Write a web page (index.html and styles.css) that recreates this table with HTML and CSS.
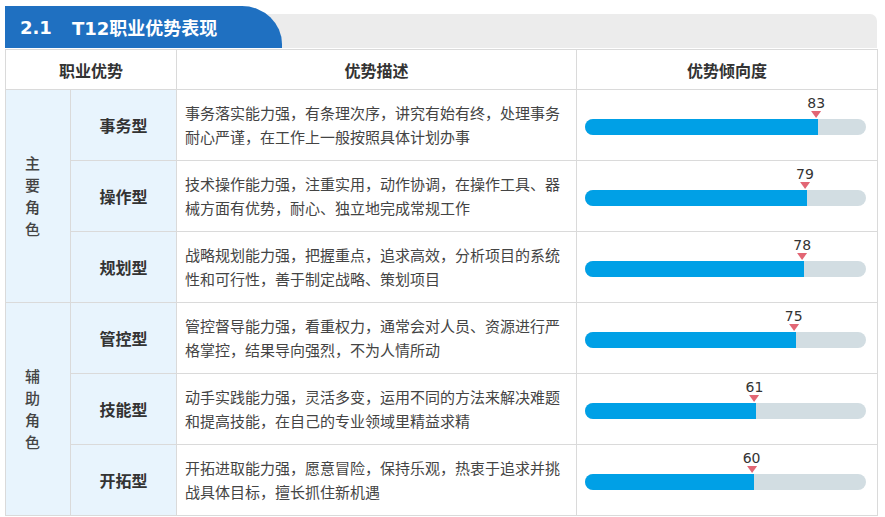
FILE: index.html
```html
<!DOCTYPE html>
<html lang="zh-CN">
<head>
<meta charset="utf-8">
<title>T12职业优势表现</title>
<link rel="stylesheet" href="styles.css">
</head>
<body>
<div class="page">
  <div class="title-bar">
    <div class="title-bg"></div>
    <div class="title-tab"><span class="sec">2.1</span><span>T12职业优势表现</span></div>
  </div>
  <table class="grid">
    <colgroup>
      <col class="c1"><col class="c2"><col class="c3"><col class="c4">
    </colgroup>
    <thead>
      <tr><th colspan="2">职业优势</th><th>优势描述</th><th>优势倾向度</th></tr>
    </thead>
    <tbody>
      <tr>
        <td class="group" rowspan="3"><div class="vert">主要角色</div></td>
        <td class="type">事务型</td>
        <td class="desc">事务落实能力强，有条理次序，讲究有始有终，处理事务耐心严谨，在工作上一般按照具体计划办事</td>
        <td class="score"><div class="gauge"><div class="marker" style="left:83%"><span class="val">83</span><span class="tri"></span></div><div class="track"><div class="fill" style="width:83%"></div></div></div></td>
      </tr>
      <tr>
        <td class="type">操作型</td>
        <td class="desc">技术操作能力强，注重实用，动作协调，在操作工具、器械方面有优势，耐心、独立地完成常规工作</td>
        <td class="score"><div class="gauge"><div class="marker" style="left:79%"><span class="val">79</span><span class="tri"></span></div><div class="track"><div class="fill" style="width:79%"></div></div></div></td>
      </tr>
      <tr>
        <td class="type">规划型</td>
        <td class="desc">战略规划能力强，把握重点，追求高效，分析项目的系统性和可行性，善于制定战略、策划项目</td>
        <td class="score"><div class="gauge"><div class="marker" style="left:78%"><span class="val">78</span><span class="tri"></span></div><div class="track"><div class="fill" style="width:78%"></div></div></div></td>
      </tr>
      <tr>
        <td class="group" rowspan="3"><div class="vert">辅助角色</div></td>
        <td class="type">管控型</td>
        <td class="desc">管控督导能力强，看重权力，通常会对人员、资源进行严格掌控，结果导向强烈，不为人情所动</td>
        <td class="score"><div class="gauge"><div class="marker" style="left:75%"><span class="val">75</span><span class="tri"></span></div><div class="track"><div class="fill" style="width:75%"></div></div></div></td>
      </tr>
      <tr>
        <td class="type">技能型</td>
        <td class="desc">动手实践能力强，灵活多变，运用不同的方法来解决难题和提高技能，在自己的专业领域里精益求精</td>
        <td class="score"><div class="gauge"><div class="marker" style="left:61%"><span class="val">61</span><span class="tri"></span></div><div class="track"><div class="fill" style="width:61%"></div></div></div></td>
      </tr>
      <tr>
        <td class="type">开拓型</td>
        <td class="desc">开拓进取能力强，愿意冒险，保持乐观，热衷于追求并挑战具体目标，擅长抓住新机遇</td>
        <td class="score"><div class="gauge"><div class="marker" style="left:60%"><span class="val">60</span><span class="tri"></span></div><div class="track"><div class="fill" style="width:60%"></div></div></div></td>
      </tr>
    </tbody>
  </table>
</div>
</body>
</html>
```

FILE: styles.css
```css
html, body {
  margin: 0;
  padding: 0;
  background: #ffffff;
}

.page {
  padding: 6px 0 0 5px;
  width: 872px;
  font-family: "Noto Sans CJK SC", "Noto Sans", sans-serif;
}

.title-bar {
  display: grid;
  height: 42px;
  margin-bottom: 1px;
}

.title-bg,
.title-tab {
  grid-area: 1 / 1;
}

.title-bg {
  margin-top: 8px;
  background: #ececec;
  border-top-right-radius: 7px;
}

.title-tab {
  width: 277px;
  background: #1f70c1;
  border-top-right-radius: 40px 38px;
  color: #ffffff;
  font-family: "DejaVu Sans", "Noto Sans CJK SC", sans-serif;
  font-weight: bold;
  font-size: 18px;
  display: flex;
  align-items: center;
  padding-left: 15px;
  box-sizing: border-box;
}

.sec {
  margin-right: 20px;
}

.grid {
  width: 872px;
  border-collapse: collapse;
  table-layout: fixed;
  color: #333333;
}

.c1 { width: 65px; }
.c2 { width: 106px; }
.c3 { width: 400px; }
.c4 { width: 301px; }

.grid th,
.grid td {
  border: 1px solid #dadada;
  padding: 0;
}

.grid th {
  height: 39px;
  font-size: 16px;
  font-weight: bold;
  text-align: center;
  background: #ffffff;
}

.grid td {
  height: 70px;
}

.group {
  background: #e8f4fd;
  text-align: center;
  vertical-align: middle;
}

.vert {
  width: 15px;
  margin: 0 auto;
  padding-right: 11px;
  font-size: 15px;
  font-weight: 500;
  line-height: 22px;
  color: #444444;
}

.type {
  background: #e8f4fd;
  text-align: center;
  vertical-align: middle;
  font-size: 16px;
  font-weight: bold;
}

.grid .desc {
  font-size: 15px;
  line-height: 24px;
  color: #444444;
  padding: 0 12px 0 8px;
  vertical-align: middle;
}

.grid .score {
  vertical-align: top;
  padding: 0 11px 0 8px;
}

.gauge {
  position: relative;
  margin-top: 5px;
  padding-top: 24px;
}

.marker {
  position: absolute;
  top: 0;
  transform: translateX(calc(-50% - 2px));
  display: flex;
  flex-direction: column;
  align-items: center;
}

.val {
  font-family: "DejaVu Sans", sans-serif;
  font-size: 14px;
  line-height: 16px;
  color: #333333;
}

.tri {
  width: 0;
  height: 0;
  border-left: 5px solid transparent;
  border-right: 5px solid transparent;
  border-top: 7px solid #e26674;
}

.track {
  height: 16px;
  border-radius: 8px;
  background: #d2dde2;
  overflow: hidden;
}

.fill {
  height: 100%;
  background: #00a0e6;
}
```
